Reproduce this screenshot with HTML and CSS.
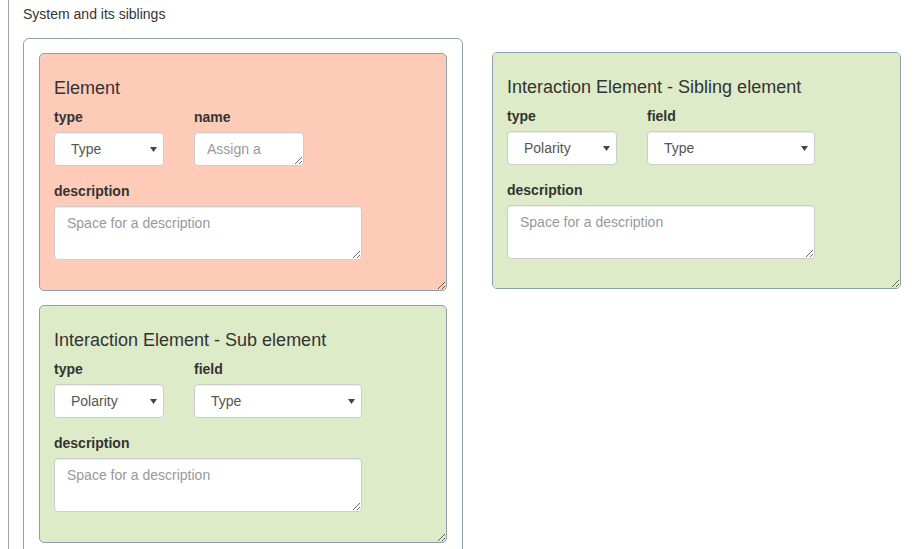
FILE: index.html
```html
<!DOCTYPE html>
<html>
<head>
<meta charset="utf-8">
<link rel="stylesheet" href="styles.css">
</head>
<body>
<div class="panel">
  <div class="caption">System and its siblings</div>
  <div class="row">
    <div class="system">
      <div class="card card-red">
        <h4 class="card-title">Element</h4>
        <div class="fields">
          <div class="group">
            <label class="lbl">type</label>
            <div class="select-wrap w-small">
              <select class="ctl select"><option>Type</option></select>
              <svg class="caret" width="7" height="5" viewBox="0 0 7 5"><path d="M0 0H7L3.5 5Z" fill="#444"/></svg>
            </div>
          </div>
          <div class="group">
            <label class="lbl">name</label>
            <textarea class="ctl name-input" placeholder="Assign a"></textarea>
          </div>
        </div>
        <div class="group">
          <label class="lbl">description</label>
          <textarea class="ctl desc" placeholder="Space for a description"></textarea>
        </div>
      </div>

      <div class="card card-green">
        <h4 class="card-title">Interaction Element - Sub element</h4>
        <div class="fields">
          <div class="group">
            <label class="lbl">type</label>
            <div class="select-wrap w-small">
              <select class="ctl select"><option>Polarity</option></select>
              <svg class="caret" width="7" height="5" viewBox="0 0 7 5"><path d="M0 0H7L3.5 5Z" fill="#444"/></svg>
            </div>
          </div>
          <div class="group">
            <label class="lbl">field</label>
            <div class="select-wrap w-wide">
              <select class="ctl select"><option>Type</option></select>
              <svg class="caret" width="7" height="5" viewBox="0 0 7 5"><path d="M0 0H7L3.5 5Z" fill="#444"/></svg>
            </div>
          </div>
        </div>
        <div class="group">
          <label class="lbl">description</label>
          <textarea class="ctl desc" placeholder="Space for a description"></textarea>
        </div>
      </div>
    </div>

    <div class="card card-green sibling">
      <h4 class="card-title">Interaction Element - Sibling element</h4>
      <div class="fields">
        <div class="group">
          <label class="lbl">type</label>
          <div class="select-wrap w-small">
            <select class="ctl select"><option>Polarity</option></select>
            <svg class="caret" width="7" height="5" viewBox="0 0 7 5"><path d="M0 0H7L3.5 5Z" fill="#444"/></svg>
          </div>
        </div>
        <div class="group">
          <label class="lbl">field</label>
          <div class="select-wrap w-wide">
            <select class="ctl select"><option>Type</option></select>
            <svg class="caret" width="7" height="5" viewBox="0 0 7 5"><path d="M0 0H7L3.5 5Z" fill="#444"/></svg>
          </div>
        </div>
      </div>
      <div class="group">
        <label class="lbl">description</label>
        <textarea class="ctl desc" placeholder="Space for a description"></textarea>
      </div>
    </div>
  </div>
</div>
</body>
</html>
```

FILE: styles.css
```css
* { box-sizing: border-box; }

html, body {
  margin: 0;
  padding: 0;
  background: #fff;
  overflow: hidden;
}

body {
  font-family: "Liberation Sans", Arial, sans-serif;
  font-size: 14px;
  line-height: 20px;
  color: #333;
}

.panel {
  margin-left: 8px;
  border-left: 1px solid #9aa8b3;
  min-height: 600px;
  padding-left: 14px;
}

.caption {
  font-size: 14px;
  line-height: 16px;
  padding-top: 6px;
  margin-bottom: 16px;
  color: #333;
}

.row {
  display: flex;
  align-items: flex-start;
  gap: 29px;
}

.system {
  width: 440px;
  border: 1px solid #93a3ae;
  border-radius: 6px;
  padding: 14px 15px 15px;
  display: flex;
  flex-direction: column;
  gap: 14px;
}

.card {
  border: 1px solid #8e9fab;
  border-radius: 5px;
  padding: 12px 14px 15px;
  resize: both;
  overflow: auto;
}

.card-red { background: #fecbb9; }
.card-green { background: #ddebc8; }

.sibling {
  width: 409px;
  margin-top: 14px;
  height: 237px;
}

.card-title {
  margin: 12px 0 9px;
  font-size: 18px;
  font-weight: normal;
  line-height: 20px;
  color: #333;
}

.fields {
  display: flex;
  gap: 30px;
}

.group {
  margin-bottom: 15px;
}

.lbl {
  display: block;
  font-weight: bold;
  margin-bottom: 5px;
  color: #333;
}

.ctl {
  display: block;
  font-family: "Liberation Sans", Arial, sans-serif;
  font-size: 14px;
  line-height: 20px;
  color: #555;
  background: #fff;
  border: 1px solid #ccc;
  border-radius: 4px;
  box-shadow: inset 0 1px 1px rgba(0, 0, 0, .075);
  margin: 0;
}

.ctl::placeholder { color: #999; }

.select-wrap {
  position: relative;
}

.w-small { width: 110px; }
.w-wide { width: 168px; }

.select {
  -webkit-appearance: none;
  appearance: none;
  width: 100%;
  height: 34px;
  padding: 6px 20px 6px 16px;
}

.caret {
  position: absolute;
  right: 7px;
  top: 15px;
}

.name-input {
  width: 110px;
  height: 34px;
  padding: 6px 12px;
  resize: both;
  overflow: hidden;
}

.desc {
  width: 308px;
  height: 54px;
  padding: 6px 12px;
  resize: both;
}
```
